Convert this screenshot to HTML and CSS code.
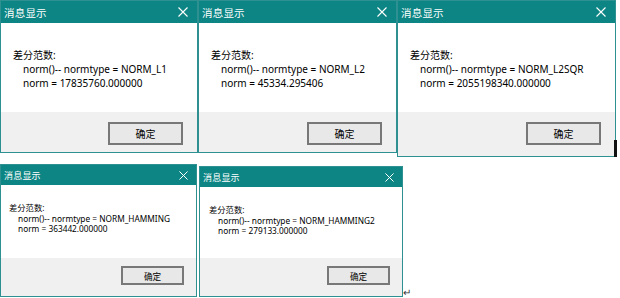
FILE: index.html
```html
<!DOCTYPE html>
<html lang="zh-CN">
<head>
  <meta charset="UTF-8">
  <meta name="viewport" content="width=device-width, initial-scale=1.0">
  <title>消息显示 - 差分范数</title>
  <link rel="stylesheet" href="styles.css">
</head>
<body>
  <div class="page">

    <!-- Primera fila: L1, L2, L2SQR -->
    <div class="row row-top">
      <div class="dialog d1">
        <div class="titlebar">
          <span class="title">消息显示</span>
          <svg class="close" viewBox="0 0 10 10"><path d="M0.5 0.5 L9.5 9.5 M9.5 0.5 L0.5 9.5"/></svg>
        </div>
        <div class="content">
          <p>差分范数:</p>
          <p class="indent">norm()-- normtype = NORM_L1</p>
          <p class="indent">norm = 17835760.000000</p>
        </div>
        <div class="footer"><button class="ok">确定</button></div>
      </div>

      <div class="dialog d2">
        <div class="titlebar">
          <span class="title">消息显示</span>
          <svg class="close" viewBox="0 0 10 10"><path d="M0.5 0.5 L9.5 9.5 M9.5 0.5 L0.5 9.5"/></svg>
        </div>
        <div class="content">
          <p>差分范数:</p>
          <p class="indent">norm()-- normtype = NORM_L2</p>
          <p class="indent">norm = 45334.295406</p>
        </div>
        <div class="footer"><button class="ok">确定</button></div>
      </div>

      <div class="dialog d3">
        <div class="titlebar">
          <span class="title">消息显示</span>
          <svg class="close" viewBox="0 0 10 10"><path d="M0.5 0.5 L9.5 9.5 M9.5 0.5 L0.5 9.5"/></svg>
        </div>
        <div class="content">
          <p>差分范数:</p>
          <p class="indent">norm()-- normtype = NORM_L2SQR</p>
          <p class="indent">norm = 2055198340.000000</p>
        </div>
        <div class="footer"><button class="ok">确定</button></div>
      </div>
      <span class="caret"></span>
    </div>

    <!-- Segunda fila: HAMMING, HAMMING2 -->
    <div class="row row-bottom">
      <div class="dialog small d4">
        <div class="titlebar">
          <span class="title">消息显示</span>
          <svg class="close" viewBox="0 0 10 10"><path d="M0.5 0.5 L9.5 9.5 M9.5 0.5 L0.5 9.5"/></svg>
        </div>
        <div class="content">
          <p>差分范数:</p>
          <p class="indent">norm()-- normtype = NORM_HAMMING</p>
          <p class="indent">norm = 363442.000000</p>
        </div>
        <div class="footer"><button class="ok">确定</button></div>
      </div>

      <div class="dialog small d5">
        <div class="titlebar">
          <span class="title">消息显示</span>
          <svg class="close" viewBox="0 0 10 10"><path d="M0.5 0.5 L9.5 9.5 M9.5 0.5 L0.5 9.5"/></svg>
        </div>
        <div class="content">
          <p>差分范数:</p>
          <p class="indent">norm()-- normtype = NORM_HAMMING2</p>
          <p class="indent">norm = 279133.000000</p>
        </div>
        <div class="footer"><button class="ok">确定</button></div>
      </div>
      <span class="mark">↵</span>
    </div>

  </div>
</body>
</html>
```

FILE: styles.css
```css
/* Estilos generales */
body {
  margin: 0;
  padding: 0;
  background-color: #ffffff;
  font-family: "Noto Sans", "Noto Sans CJK SC", sans-serif;
  color: #000;
}

.page {
  width: 620px;
  height: 298px;
  overflow: hidden;
}

.row {
  display: flex;
  align-items: flex-start;
}

.row-bottom {
  margin-top: 6px;
}

/* Ventana de mensaje */
.dialog {
  display: flex;
  flex-direction: column;
  border: 1px solid #2e9090;
  background-color: #ffffff;
  box-sizing: border-box;
}

.d1 { width: 198px; height: 153px; }
.d2 { width: 199px; height: 153px; }
.d3 { width: 219px; height: 157px; }
.d4 { width: 197px; height: 133px; margin-top: 1px; }
.d5 { width: 204px; height: 131px; margin-left: 2px; margin-top: 3px; }

.titlebar {
  height: 22px;
  background-color: #0c8584;
  color: #ffffff;
  display: flex;
  align-items: center;
  justify-content: space-between;
  padding: 0 9px 0 3px;
  flex-shrink: 0;
}

.title {
  font-size: 10.5px;
  letter-spacing: 0.2px;
}

.close {
  width: 10px;
  height: 10px;
  stroke: #ffffff;
  stroke-width: 1.1;
  fill: none;
}

.content {
  flex: 1;
  padding: 25px 0 0 12px;
  font-size: 10px;
  line-height: 14px;
}

.content p {
  margin: 0;
}

.indent {
  padding-left: 10px;
}

.footer {
  height: 40px;
  background-color: #f0f0f0;
  display: flex;
  justify-content: flex-end;
  align-items: flex-start;
  padding: 10px 14px 0 0;
  box-sizing: border-box;
  flex-shrink: 0;
}

.d3 .footer {
  height: 44px;
}

.ok {
  width: 75px;
  height: 23px;
  background-color: #e8e8e8;
  border: 2px solid #787878;
  font-family: "Noto Sans CJK SC", sans-serif;
  font-size: 10px;
  padding: 0;
  color: #000;
}

/* Ventanas pequeñas */
.small .titlebar {
  height: 20px;
  padding: 0 8px 0 3px;
}

.small .title {
  font-size: 9px;
}

.small .close {
  width: 9px;
  height: 9px;
}

.small .content {
  padding: 18px 0 0 8px;
  font-size: 8.3px;
  line-height: 10.5px;
}

.d5 .content {
  padding-left: 9px;
}

.small .indent {
  padding-left: 9px;
}

.small .footer {
  height: 38px;
  padding: 8px 12px 0 0;
}

.small .ok {
  width: 63px;
  height: 19px;
  font-size: 8.6px;
}

/* Marcas del documento */
.caret {
  width: 3px;
  height: 17px;
  background-color: #111;
  margin-top: 140px;
  margin-left: -2px;
}

.mark {
  font-size: 10px;
  line-height: 10px;
  margin-top: 124px;
  color: #333;
}
```
